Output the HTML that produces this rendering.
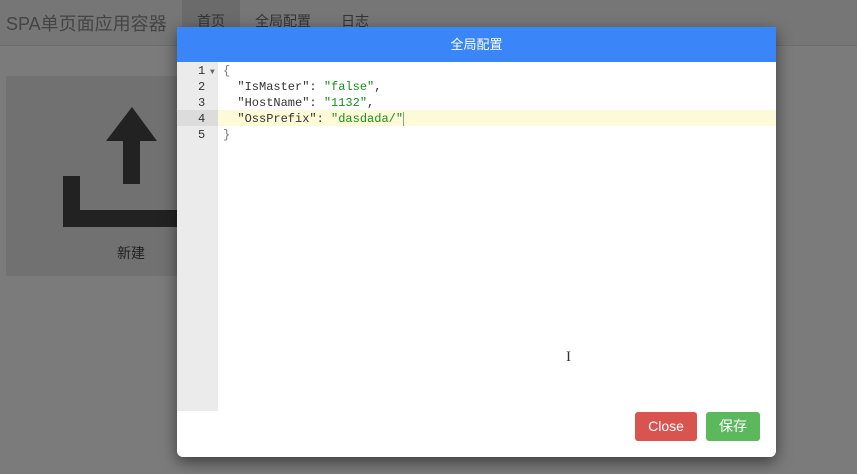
<!DOCTYPE html>
<html><head><meta charset="utf-8"><style>
*{margin:0;padding:0;box-sizing:border-box}
body{width:857px;height:474px;overflow:hidden;background:#7b7b7b;font-family:"Liberation Sans","Noto Sans CJK SC",sans-serif;position:relative}
.nav{position:absolute;left:0;top:0;width:857px;height:46px;background:#767676;border-bottom:1px solid #6c6c6c}
.brand{position:absolute;left:6px;top:10px;font-size:18px;color:#444}
.tab{position:absolute;top:0;height:46px;line-height:42px;font-size:14px;color:#333}
.card{position:absolute;left:6px;top:76px;width:200px;height:200px;background:#717171}
.modal{position:absolute;left:177px;top:27px;width:599px;height:430px;background:#fff;border-radius:0 0 6px 6px;box-shadow:0 5px 15px rgba(0,0,0,.5);overflow:hidden}
.hd{height:35px;background:#3a85f7;color:#fff;font-size:13px;text-align:center;line-height:35px}
.ed{position:absolute;top:35px;left:0;width:599px;height:349px}
.gut{position:absolute;left:0;top:0;width:41px;height:349px;background:#ebebeb}
.ln{position:absolute;font:12px "Liberation Mono",monospace;color:#333;height:16px;line-height:18px}
.code{position:absolute;left:46px;font:12px "Liberation Mono",monospace;color:#333;height:16px;line-height:18px;white-space:pre}
.s{color:#1a8f1a}
.btn{position:absolute;top:385px;height:29px;color:#fff;font-size:14px;text-align:center;line-height:28px;border-radius:3px}
</style></head><body>
<div class="nav">
<div class="brand">SPA单页面应用容器</div>
<div class="tab" style="left:182px;width:58px;background:#6b6b6b;padding-left:15px">首页</div>
<div class="tab" style="left:255px">全局配置</div>
<div class="tab" style="left:341px">日志</div>
</div>
<div class="card">
<svg width="200" height="200" style="position:absolute;left:0;top:0"><g fill="#222"><polygon points="126,31 151,65 134,65 134,108 117,108 117,65 100,65"/><path d="M57 100H74V134H200V151H57Z"/></g></svg>
<div style="position:absolute;left:111px;top:167px;font-size:14px;color:#222">新建</div>
</div>
<div class="modal">
<div class="hd">全局配置</div>
<div class="ed">
<div class="gut"></div>
<div style="position:absolute;left:0;top:48px;width:41px;height:16px;background:#dcdcdc"></div>
<div style="position:absolute;left:41px;top:48px;width:558px;height:16px;background:#fdfad7"></div>
<div class="ln" style="left:21px;top:0">1<span style="font-size:8px;color:#666"> ▼</span></div>
<div class="ln" style="left:21px;top:16px">2</div>
<div class="ln" style="left:21px;top:32px">3</div>
<div class="ln" style="left:21px;top:48px">4</div>
<div class="ln" style="left:21px;top:64px">5</div>
<div class="code" style="top:0;color:#777">{</div>
<div class="code" style="top:16px">  "IsMaster": <span class="s">"false"</span>,</div>
<div class="code" style="top:32px">  "HostName": <span class="s">"1132"</span>,</div>
<div class="code" style="top:48px">  "OssPrefix": <span class="s">"dasdada/"</span><span style="border-left:1px solid #999"></span></div>
<div class="code" style="top:64px;color:#777">}</div>
</div>
<div class="btn" style="left:458px;width:62px;background:#d9534f">Close</div>
<div class="btn" style="left:529px;width:54px;background:#5cb85c">保存</div>
</div>
<div style="position:absolute;left:566px;top:349px;font:15px 'Liberation Serif',serif;color:#333">I</div>
</body></html>
